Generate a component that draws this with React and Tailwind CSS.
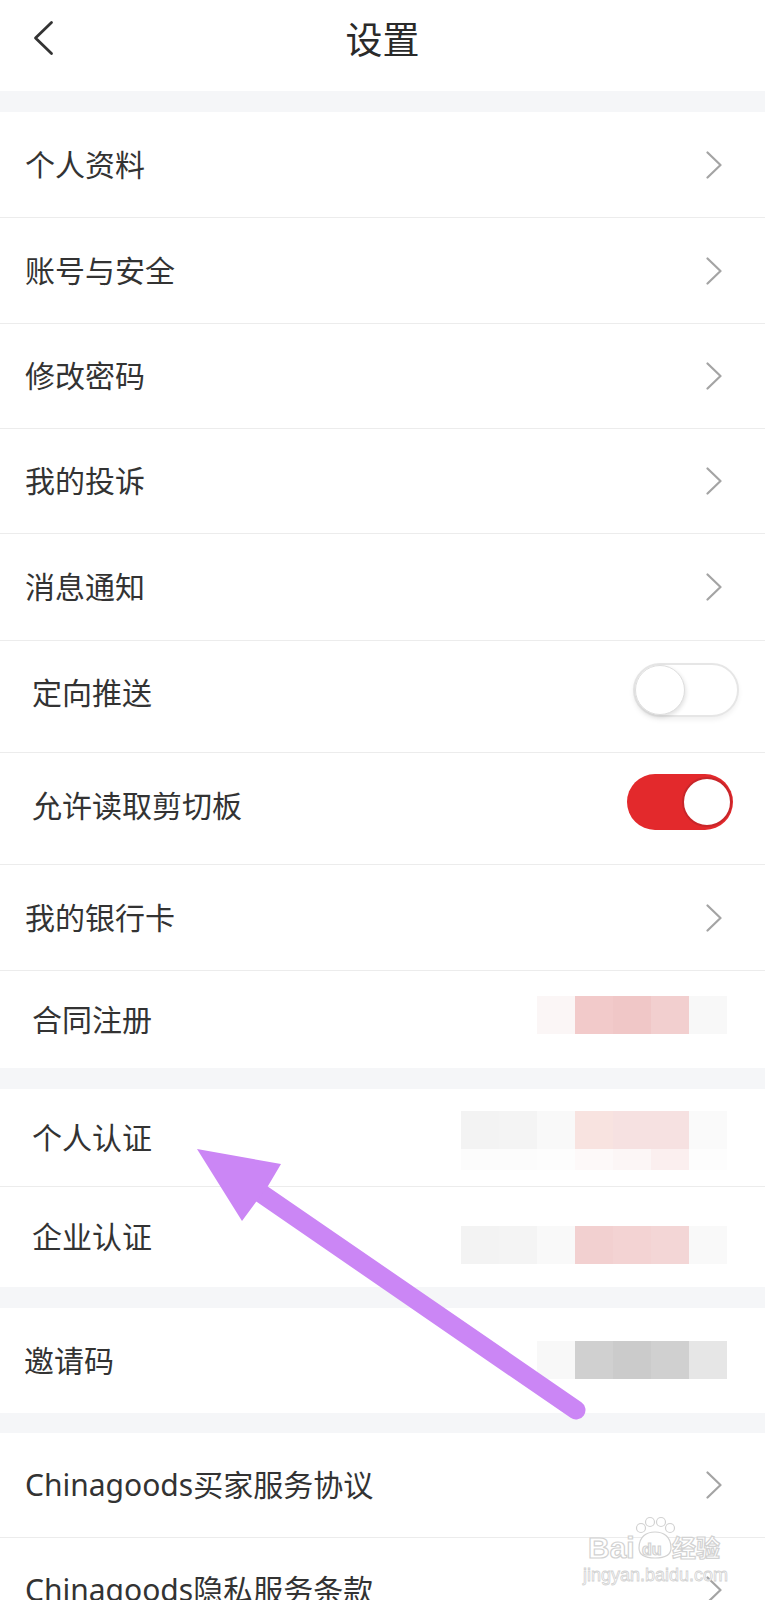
import React from "react";

const FONT = { fontFamily: '"Noto Sans", "Noto Sans CJK SC", sans-serif' };

function Chevron() {
  return (
    <svg width="16" height="28" viewBox="0 0 16 28" className="shrink-0">
      <path d="M1.5 1.5 L14.5 14 L1.5 26.5" fill="none" stroke="#a4a4a4" strokeWidth="2.2" strokeLinecap="round" strokeLinejoin="round" />
    </svg>
  );
}

function Block({ colors, className }) {
  return (
    <div className={"flex h-[38px] " + className}>
      {colors.map((c, i) => (
        <div key={i} className="w-[38px] h-full" style={{ backgroundColor: c }} />
      ))}
    </div>
  );
}

function Label({ children, className = "" }) {
  return <span className={"text-[30px] leading-[1.4] text-[#333333] whitespace-nowrap " + className}>{children}</span>;
}

function ChevronRow({ label, h }) {
  return (
    <div className={"flex items-center justify-between pl-[25px] pr-[43px] border-b border-[#ececec] " + h}>
      <Label>{label}</Label>
      <Chevron />
    </div>
  );
}

export default function App() {
  return (
    <div className="relative w-[765px] h-[1600px] overflow-hidden bg-white" style={FONT}>
      {/* Header */}
      <div className="relative h-[91px] flex items-center justify-center pb-[11px] bg-white">
        <svg width="24" height="36" viewBox="0 0 24 36" className="absolute left-[31px] top-[20px]">
          <path d="M20.5 2.5 L4.5 18 L20.5 33.5" fill="none" stroke="#333333" strokeWidth="2.8" strokeLinecap="round" strokeLinejoin="round" />
        </svg>
        <span className="text-[37px] leading-[1.2] text-[#2a2a2a]">设置</span>
      </div>
      <div className="h-[21px] bg-[#f5f6f8]" />

      {/* Group 1 */}
      <ChevronRow label="个人资料" h="h-[106px]" />
      <ChevronRow label="账号与安全" h="h-[106px]" />
      <ChevronRow label="修改密码" h="h-[105px]" />
      <ChevronRow label="我的投诉" h="h-[105px]" />
      <ChevronRow label="消息通知" h="h-[107px]" />

      <div className="h-[112px] flex items-center justify-between pl-[32px] pr-[26px] border-b border-[#ececec]">
        <Label className="mb-[8px]">定向推送</Label>
        <div className="mb-[13px] w-[106px] h-[54px] rounded-full border-2 border-[#e6e6e6] bg-white flex items-center justify-start shadow-[0_3px_5px_rgba(0,0,0,0.06)]">
          <div className="w-[50px] h-[50px] rounded-full bg-white border border-[#dedede] shadow-[1px_2px_4px_rgba(0,0,0,0.12)]" />
        </div>
      </div>

      <div className="h-[112px] flex items-center justify-between pl-[32px] pr-[32px] border-b border-[#ececec]">
        <Label className="mb-[6px]">允许读取剪切板</Label>
        <div className="mb-[14px] w-[106px] h-[56px] rounded-full bg-[#e3292c] flex items-center justify-end pr-[1px]">
          <div className="w-[50px] h-[50px] rounded-full bg-white border-2 border-[#c8262a]" />
        </div>
      </div>

      <ChevronRow label="我的银行卡" h="h-[106px]" />

      <div className="h-[97px] flex items-center justify-between pl-[32px] pr-[38px]">
        <Label>合同注册</Label>
        <Block className="self-start mt-[25px]" colors={["#fbf6f6", "#f2caca", "#f0c7c7", "#f2cfcf", "#f8f8f8"]} />
      </div>

      <div className="h-[21px] bg-[#f5f6f8]" />

      {/* Group 2 */}
      <div className="h-[98px] flex items-center justify-between pl-[32px] pr-[38px] border-b border-[#ececec]">
        <Label>个人认证</Label>
        <div className="self-start mt-[22px] flex flex-col">
          <Block className="" colors={["#f3f3f3", "#f4f4f4", "#f9f9f9", "#f8e3e0", "#f6e1e1", "#f6e1e1", "#fafafa"]} />
          <div className="flex h-[21px]">
            <div className="w-[38px] bg-[#fcfcfc]" />
            <div className="w-[38px] bg-[#fcfcfc]" />
            <div className="w-[38px] bg-[#fdfdfd]" />
            <div className="w-[38px] bg-[#fdf9f9]" />
            <div className="w-[38px] bg-[#fcf6f6]" />
            <div className="w-[38px] bg-[#fbefef]" />
            <div className="w-[38px] bg-[#fdfdfd]" />
          </div>
        </div>
      </div>

      <div className="h-[100px] flex items-center justify-between pl-[32px] pr-[38px]">
        <Label>企业认证</Label>
        <Block className="self-start mt-[39px]" colors={["#f3f3f3", "#f4f4f4", "#f9f9f9", "#f2d0d0", "#f3d3d3", "#f3d6d6", "#f9f9f9"]} />
      </div>

      <div className="h-[21px] bg-[#f5f6f8]" />

      <div className="h-[105px] flex items-center justify-between pl-[24px] pr-[38px]">
        <Label>邀请码</Label>
        <Block className="self-start mt-[33px]" colors={["#f8f8f8", "#d0d0d0", "#cbcbcb", "#d0d0d0", "#e6e6e6"]} />
      </div>

      <div className="h-[20px] bg-[#f5f6f8]" />

      <ChevronRow label="Chinagoods买家服务协议" h="h-[105px]" />
      <ChevronRow label="Chinagoods隐私服务条款" h="h-[105px]" />

      {/* Annotation arrow */}
      <svg className="absolute left-0 top-0 pointer-events-none" width="765" height="1600" viewBox="0 0 765 1600">
        <line x1="262" y1="1194" x2="576" y2="1410" stroke="#cb86f5" strokeWidth="19" strokeLinecap="round" />
        <polygon points="197,1149 281,1164 268,1186 256,1202 242,1221" fill="#cb86f5" />
      </svg>

      {/* Watermark */}
      <svg className="absolute left-0 top-0 pointer-events-none" width="765" height="1600" viewBox="0 0 765 1600">
        <g fill="#ffffff" stroke="#d2d2d2" strokeWidth="1.2">
          <text x="588" y="1558" fontSize="30" fontWeight="700" fontFamily="Liberation Sans, sans-serif">Bai</text>
          <circle cx="641" cy="1528" r="4.5" />
          <circle cx="650" cy="1522" r="4.5" />
          <circle cx="661" cy="1522" r="4.5" />
          <circle cx="670" cy="1528" r="4.5" />
          <path d="M639 1548 C639 1536 647 1532 655 1532 C663 1532 671 1536 671 1548 C671 1556 664 1558 655 1558 C646 1558 639 1556 639 1548 Z" />
          <text x="642" y="1555" fontSize="16" fontWeight="700" fontFamily="Liberation Sans, sans-serif">du</text>
          <text x="672" y="1557" fontSize="24" fontWeight="700" fontFamily="Noto Sans CJK SC, sans-serif">经验</text>
          <text x="583" y="1581" fontSize="18" strokeWidth="0.8" fontFamily="Liberation Sans, sans-serif">jingyan.baidu.com</text>
        </g>
      </svg>
    </div>
  );
}
